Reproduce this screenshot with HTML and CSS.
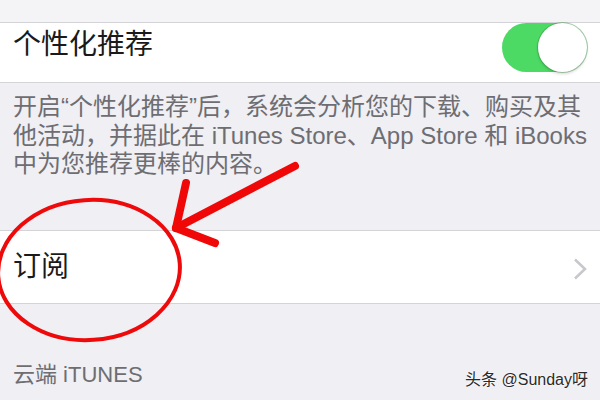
FILE: index.html
```html
<!DOCTYPE html>
<html lang="zh-CN">
<head>
  <meta charset="UTF-8" />
  <meta name="viewport" content="width=device-width, initial-scale=1.0"/>
  <title>iTunes 与 App Store</title>
  <link rel="stylesheet" href="styles.css">
</head>
<body>
  <div class="top-gap"></div>

  <div class="cell cell-toggle">
    <span class="cell-title">个性化推荐</span>
    <div class="switch on"><div class="knob"></div></div>
  </div>

  <p class="note">开启“个性化推荐”后，系统会分析您的下载、购买及其<br>他活动，并据此在 iTunes Store、App Store 和 iBooks<br>中为您推荐更棒的内容。</p>

  <div class="cell cell-link">
    <span class="cell-title">订阅</span>
    <svg class="chevron" viewBox="0 0 14 22" width="14" height="22">
      <polyline points="2,1.5 12,11 2,20.5" />
    </svg>
  </div>

  <div class="section-header">云端 iTUNES</div>

  <!-- red annotation drawn over the screenshot -->
  <svg class="marks" viewBox="0 0 600 400" width="600" height="400">
    <ellipse cx="89" cy="270" rx="91" ry="70" transform="rotate(-4 89 270)" />
    <line class="arrow" x1="295" y1="166" x2="176" y2="228" />
    <line class="arrow" x1="186" y1="183" x2="176" y2="228" />
    <line class="arrow" x1="176" y1="228" x2="215" y2="243" />
  </svg>

  <div class="watermark">头条 @Sunday呀</div>
</body>
</html>
```

FILE: styles.css
```css
body {
  margin: 0;
  width: 600px;
  height: 400px;
  overflow: hidden;
  position: relative;
  background-color: #efeff4;
  font-family: "Liberation Sans", "Noto Sans CJK SC", sans-serif;
  color: #000;
}

.top-gap {
  height: 22px;
  background-color: #f4f4f6;
}

.cell {
  display: flex;
  align-items: center;
  justify-content: space-between;
  background-color: #fff;
  border-top: 1px solid #d4d4d8;
  border-bottom: 1px solid #d4d4d8;
  padding: 0 13px;
}

.cell-toggle {
  height: 59px;
  align-items: flex-start;
}

.cell-toggle .cell-title {
  margin-top: 4px;
}

.cell-link {
  height: 72px;
}

.cell-title {
  font-size: 28px;
  line-height: 36px;
  color: #1a1a1a;
}

.switch {
  width: 85px;
  height: 49px;
  border-radius: 25px;
  background-color: #4cd964;
  position: relative;
}

.knob {
  position: absolute;
  top: 0;
  right: 0;
  width: 49px;
  height: 49px;
  border-radius: 50%;
  background: #fff;
  box-shadow: 0 0 0 1px rgba(60, 140, 70, 0.45), 0 2px 3px rgba(0, 0, 0, 0.15);
}

.chevron polyline {
  fill: none;
  stroke: #c7c7cc;
  stroke-width: 2.5;
}

.chevron {
  margin-top: 4px;
}

.note {
  margin: 0;
  padding: 10px 13px 51px;
  font-size: 24px;
  line-height: 28.5px;
  color: #6d6d72;
}

.section-header {
  padding: 58px 13px 0;
  font-size: 22px;
  line-height: 26px;
  color: #6d6d72;
}

.marks {
  position: absolute;
  left: 0;
  top: 0;
}

.marks ellipse {
  fill: none;
  stroke: #ee0a0a;
  stroke-width: 4;
}

.marks .arrow {
  stroke: #f00808;
  stroke-width: 8;
  stroke-linecap: round;
}

.watermark {
  position: absolute;
  right: 12px;
  top: 370px;
  font-size: 16px;
  line-height: 20px;
  color: #2a2a2a;
  text-shadow: 0 0 2px #fff, 0 0 2px #fff;
}
```
